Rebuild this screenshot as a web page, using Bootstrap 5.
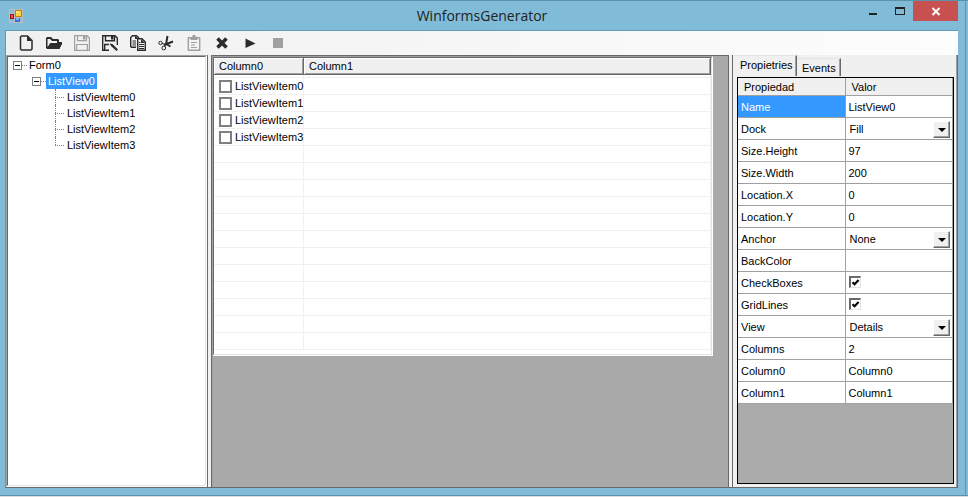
<!DOCTYPE html>
<html lang="en">
<head>
<meta charset="utf-8">
<meta name="viewport" content="width=device-width, initial-scale=1">
<title>WinformsGenerator</title>
<link href="https://cdn.jsdelivr.net/npm/bootstrap@5.3.0/dist/css/bootstrap.min.css" rel="stylesheet">
<style>
  body { font: 11px/16px "Liberation Sans", Arial, sans-serif; color: #000; background: #d9dde0; }
  .app-window { background: #80bcd8; border-top: 1px solid #5c93ab; border-bottom: 1px solid #5c93ab; padding: 0 10px 7px 5px; margin-bottom: 1px; position: relative; }
  .app-window::after { content: ""; position: absolute; top: 0; right: 2px; bottom: 0; border-right: 1px solid #5c93ab; }
  .title-bar { height: 29px; }
  .title-bar h1 { font: 14px/20px "Open Sans", "Noto Sans", sans-serif; color: #222; padding: 5px 0 0 82px; }
  .win-btn { width: 27px; height: 20px; padding: 0; border: 0; background: none; line-height: 0; }
  .win-close { width: 45px; background: #c75050; }
  .client { border: 1px solid #629bb5; border-bottom-color: #696969; border-right: 0; background: #f0f0f0; }
  .tools { height: 24px; padding-left: 6px; background: linear-gradient(90deg, #f0f0f0, #fdfdfd); }
  .tool { width: 28px; height: 24px; padding: 0; border: 0; background: none; color: #2b2b2b; line-height: 0; }
  .tool:disabled { color: #a0a0a0; }
  .tool svg, .win-btn svg { display: inline-block; }
  .tree-pane { width: 201px; background: #fff; border: 1px solid #a0a0a0; border-right-color: #fff; border-bottom-color: #fff; }
  .tree-in { border: 1px solid #696969; border-right-color: #e3e3e3; border-bottom-color: #e3e3e3; padding: 0 0 0 5px; }
  .tree-in ul ul { padding-left: 19px; }
  .tree-row { height: 16px; }
  .fold { width: 9px; height: 9px; padding: 0; border: 1px solid #808080; background: linear-gradient(#000, #000) center / 5px 1px no-repeat #fff; }
  .dash { width: 5px; border-top: 1px dotted #808080; }
  .node { padding: 0 2px; }
  .node.picked { background: #3399ff; color: #fff; }
  .limb { width: 10px; height: 16px; margin-left: 4px; position: relative; }
  .limb::before { content: ""; position: absolute; left: 0; top: 0; height: 16px; border-left: 1px dotted #808080; }
  .limb::after { content: ""; position: absolute; left: 0; top: 8px; width: 9px; border-top: 1px dotted #808080; }
  li:last-child > .tree-row > .limb::before { height: 8px; }
  .splitter { width: 5px; border: 1px solid #696969; border-width: 0 1px; background: #f0f0f0; }
  .canvas { background: #a9a9a9; border-top: 1px solid #696969; border-left: 1px solid #a0a0a0; min-width: 0; }
  .list-box { margin-right: 15px; background: #fff; border: 1px solid #a0a0a0; border-left: 0; border-right-color: #fff; border-bottom-color: #fff; }
  .list-in { border: 1px solid #696969; border-right-color: #e3e3e3; border-bottom-color: #e3e3e3; padding-bottom: 4px; }
  .grid { width: 100%; table-layout: fixed; border-collapse: separate; border-spacing: 0; }
  .grid th { font-weight: 400; background: #f0f0f0; }
  .list th { height: 17px; padding: 0 5px; border: 1px solid #696969; border-width: 0 1px 1px 0; box-shadow: inset 1px 1px #fff, inset -1px -1px #a0a0a0; }
  .list td { height: 17px; padding: 0 0 0 5px; border: 1px solid #f0f0f0; border-width: 0 1px 1px 0; }
  .list tr.lead-gap td { height: 3px; }
  .list label { gap: 3px; }
  .pick { appearance: none; flex: none; width: 13px; height: 13px; margin: 0; border: 2px solid #808080; background: #fff; }
  .side { width: 225px; border-right: 1px solid #696969; box-shadow: inset -1px 0 #a0a0a0; padding: 0 3px 0 1px; }
  .tabs { height: 21px; }
  .tab-btn { font: inherit; border: 0; padding: 0 5px; background: #f0f0f0; border-top: 1px solid #e3e3e3; border-right: 1px solid #696969; box-shadow: inset -1px 0 #a0a0a0; }
  .tab-btn.on { height: 21px; width: 63px; padding-left: 6px; padding-bottom: 2px; }
  .tab-btn.off { height: 18px; width: 44px; }
  .prop-box { background: #ababab; border: 1px solid #000; margin: 1px 0 3px 3px; }
  .props th, .props td { height: 22px; padding: 0 3px; border: 1px solid #a0a0a0; border-width: 0 1px 1px 0; background: #fff; vertical-align: middle; }
  .props thead th { height: 18px; padding: 0 6px; background: #f0f0f0; }
  .props tbody tr.sel th { background: #3399ff; color: #fff; }
  .drop { appearance: none; font: inherit; color: #000; border: 0; background: none; width: 100%; height: 20px; padding: 0 0 0 1px; }
  .arrow { position: absolute; right: -1px; top: 2px; width: 17px; height: 17px; background: #f0f0f0; border: 1px solid #fff; border-right-color: #696969; border-bottom-color: #696969; box-shadow: inset -1px -1px #a0a0a0; pointer-events: none; }
  .arrow::after { content: ""; position: absolute; left: 4px; top: 6px; border: 4px solid transparent; border-top-color: #000; border-bottom: 0; }
  .tick { appearance: none; display: block; width: 12px; height: 12px; margin: 0 0 2px; border: 2px solid #696969; border-right: 1px solid #e3e3e3; border-bottom: 1px solid #e3e3e3; background: #fff; }
  .tick:checked { background: #fff url("data:image/svg+xml,%3Csvg xmlns='http://www.w3.org/2000/svg' viewBox='0 0 9 9'%3E%3Cpath d='M1.5 4.2 3.6 6.3 7.6 2' fill='none' stroke='%23000' stroke-width='2.1'/%3E%3C/svg%3E") center / 9px 9px no-repeat; }
</style>
<script src="https://cdn.jsdelivr.net/npm/bootstrap@5.3.0/dist/js/bootstrap.bundle.min.js"></script>
</head>
<body class="vh-100 d-flex flex-column overflow-hidden">
<div class="app-window flex-grow-1 d-flex flex-column">
  <header class="title-bar d-flex align-items-start">
    <svg class="ms-1 mt-2" width="14" height="14" viewBox="0 0 14 14" aria-hidden="true">
      <path d="M0 0h14v14H0z" fill="#b9bec4"/><path d="M1 1h4v3H1zM1 10h4v3H1zM11 9h2v4h-2z" fill="#8cbad4"/>
      <path d="M6 1h7v7H6z" fill="#b98400"/><path d="M7 2h5v5H7z" fill="#ffd23c"/><path d="M7 2h3v2H7z" fill="#ffe98c"/>
      <path d="M1 5h4v5H1z" fill="#a31208"/><path d="M2 6h2v3H2z" fill="#e8574a"/><path d="M6 9h5v4H6z" fill="#3b6fd6"/><path d="M7 9h3v2H7z" fill="#7fb0ff"/>
    </svg>
    <h1 class="m-0 flex-grow-1 text-center">WinformsGenerator</h1>
    <button class="win-btn" aria-label="Minimize"><svg width="10" height="20" viewBox="0 0 10 20"><path d="M1 12h8v2H1z" fill="#222"/></svg></button>
    <button class="win-btn" aria-label="Maximize"><svg width="10" height="20" viewBox="0 0 10 20"><path d="M0 6h10v8H0zM1 8v5h8V8z" fill="#222" fill-rule="evenodd"/></svg></button>
    <button class="win-btn win-close" aria-label="Close"><svg width="10" height="20" viewBox="0 0 10 20"><path d="M1.500 7 8.500 14M8.500 7 1.500 14" stroke="#fff" stroke-width="2"/></svg></button>
  </header>

  <div class="client flex-grow-1 d-flex flex-column">
    <div class="tools d-flex" role="toolbar" aria-label="Tools">
      <button class="tool" aria-label="New"><svg width="16" height="16" viewBox="0 0 16 16"><path d="M3.500 1h6L14 5.500V14l-1 1H3.500l-1-1V2z" fill="none" stroke="currentColor" stroke-width="1.500"/><path d="M9 1v5h5z" fill="currentColor"/></svg></button>
      <button class="tool" aria-label="Open"><svg width="16" height="16" viewBox="0 0 16 16"><path d="M0 3l1-1h4l2 2h5l1 1v2h3v2l-3 5H1l-1-1zM1.500 12l3-4H11V6H6L4 4H1.500zM5 8.500h9.500V8H5z" fill="currentColor" fill-rule="evenodd"/><path d="M4.500 8H16l-2.500 6H2z" fill="currentColor"/></svg></button>
      <button class="tool" aria-label="Save" disabled><svg width="16" height="16" viewBox="0 0 16 16"><path d="M.6.600H13L15.400 3v12.400H.6zM3.500.600v5h9v-5M2.600 15.400V9.500h10.800v5.900" fill="none" stroke="currentColor" stroke-width="1.200"/><path d="M9 1h2.500v3.500H9z" fill="currentColor"/></svg></button>
      <button class="tool" aria-label="Save as"><svg width="16" height="16" viewBox="0 0 16 16"><path d="M7 15.300H.7V.7H13L15.300 3v7M3.500.7v5h9v-5M2.700 15.300V9.500H7" fill="none" stroke="currentColor" stroke-width="1.400"/><path d="M9 1h2.500v3.500H9zM7.500 8.500l3 .5 5.500 5.500L14.500 16 9 11z" fill="currentColor"/></svg></button>
      <button class="tool" aria-label="Copy"><svg width="16" height="16" viewBox="0 0 16 16"><path d="M6 12.300H1.500l-.8-.8v-9L2.500.7h4L9 3M7.700 3.700H12L15.300 7v8.300H7.700z" fill="none" stroke="currentColor" stroke-width="1.400"/><path d="M5 1v3h4zM11 4v4h4zM2.500 5.500H6v1H2.500zM2.500 7.500H6v1H2.500zM2.500 9.500H6v1H2.500zM9 9h5v1H9zM9 11h5v1H9zM9 13h5v1H9zM9 7h1.500v1H9z" fill="currentColor"/></svg></button>
      <button class="tool" aria-label="Cut"><svg width="16" height="16" viewBox="0 0 16 16"><path d="M9.500 1 8 9.500M15 6.500 6 10M8 9l4.500 2.500" fill="none" stroke="currentColor" stroke-width="2"/><path d="M8 9.500 4 8.500M8 9.500 6.500 12" stroke="currentColor"/><circle cx="2.500" cy="8" r="1.700" fill="none" stroke="currentColor"/><circle cx="5.800" cy="13" r="1.900" fill="none" stroke="currentColor"/></svg></button>
      <button class="tool" aria-label="Paste" disabled><svg width="16" height="16" viewBox="0 0 16 16"><path d="M2.300 2.700h11.400v12.600H2.300z" fill="none" stroke="currentColor" stroke-width="1.400"/><path d="M4.500 2H6l1-2h2l1 2h1.500v3h-7zM5 7h6v1H5zM5 9.500h4v1H5zM5 12h6v1H5z" fill="currentColor"/></svg></button>
      <button class="tool" aria-label="Delete"><svg width="16" height="16" viewBox="0 0 16 16"><path d="M3.500 3.500 12.500 12.500M12.500 3.500 3.500 12.500" stroke="currentColor" stroke-width="3.600"/></svg></button>
      <button class="tool" aria-label="Run"><svg width="16" height="16" viewBox="0 0 16 16"><path d="M3.500 3.500 13.500 8.500 3.500 13z" fill="currentColor"/></svg></button>
      <button class="tool" aria-label="Stop" disabled><svg width="16" height="16" viewBox="0 0 16 16"><path d="M3 3h10v10H3z" fill="currentColor"/></svg></button>
    </div>

    <div class="flex-grow-1 d-flex">
      <nav class="tree-pane d-flex flex-shrink-0" aria-label="Form tree">
        <div class="tree-in flex-grow-1">
          <ul class="list-unstyled m-0">
            <li>
              <div class="tree-row d-flex align-items-center"><button class="fold" aria-label="Collapse Form0"></button><span class="dash"></span><span class="node">Form0</span></div>
              <ul class="list-unstyled">
                <li>
                  <div class="tree-row d-flex align-items-center"><button class="fold" aria-label="Collapse ListView0"></button><span class="dash"></span><span class="node picked">ListView0</span></div>
                  <ul class="list-unstyled">
                    <li><div class="tree-row d-flex"><span class="limb"></span><span class="node">ListViewItem0</span></div></li>
                    <li><div class="tree-row d-flex"><span class="limb"></span><span class="node">ListViewItem1</span></div></li>
                    <li><div class="tree-row d-flex"><span class="limb"></span><span class="node">ListViewItem2</span></div></li>
                    <li><div class="tree-row d-flex"><span class="limb"></span><span class="node">ListViewItem3</span></div></li>
                  </ul>
                </li>
              </ul>
            </li>
          </ul>
        </div>
      </nav>
      <div class="splitter flex-shrink-0"></div>
      <main class="canvas flex-grow-1">
        <div class="list-box"><div class="list-in">
          <table class="grid list">
            <colgroup><col style="width:90px"><col></colgroup>
            <thead><tr><th>Column0</th><th>Column1</th></tr></thead>
            <tbody>
              <tr class="lead-gap"><td></td><td></td></tr>
              <tr><td><label class="d-flex align-items-center"><input class="pick" type="checkbox">ListViewItem0</label></td><td></td></tr>
              <tr><td><label class="d-flex align-items-center"><input class="pick" type="checkbox">ListViewItem1</label></td><td></td></tr>
              <tr><td><label class="d-flex align-items-center"><input class="pick" type="checkbox">ListViewItem2</label></td><td></td></tr>
              <tr><td><label class="d-flex align-items-center"><input class="pick" type="checkbox">ListViewItem3</label></td><td></td></tr>
              <tr><td></td><td></td></tr><tr><td></td><td></td></tr><tr><td></td><td></td></tr><tr><td></td><td></td></tr>
              <tr><td></td><td></td></tr><tr><td></td><td></td></tr><tr><td></td><td></td></tr><tr><td></td><td></td></tr>
              <tr><td></td><td></td></tr><tr><td></td><td></td></tr><tr><td></td><td></td></tr><tr><td></td><td></td></tr>
            </tbody>
          </table>
        </div></div>
      </main>
      <div class="splitter flex-shrink-0"></div>
      <aside class="side d-flex flex-column flex-shrink-0">
        <div class="tabs d-flex align-items-end" role="tablist">
          <button class="tab-btn on text-start" role="tab" aria-selected="true">Propietries</button>
          <button class="tab-btn off text-start" role="tab" aria-selected="false">Events</button>
        </div>
        <div class="prop-box flex-grow-1">
          <table class="grid props">
            <thead><tr><th>Propiedad</th><th>Valor</th></tr></thead>
            <tbody>
              <tr class="sel"><th scope="row">Name</th><td>ListView0</td></tr>
              <tr><th scope="row" id="p-dock">Dock</th><td><div class="position-relative"><select class="drop" aria-labelledby="p-dock"><option>Fill</option></select><span class="arrow"></span></div></td></tr>
              <tr><th scope="row">Size.Height</th><td>97</td></tr>
              <tr><th scope="row">Size.Width</th><td>200</td></tr>
              <tr><th scope="row">Location.X</th><td>0</td></tr>
              <tr><th scope="row">Location.Y</th><td>0</td></tr>
              <tr><th scope="row" id="p-anchor">Anchor</th><td><div class="position-relative"><select class="drop" aria-labelledby="p-anchor"><option>None</option></select><span class="arrow"></span></div></td></tr>
              <tr><th scope="row">BackColor</th><td></td></tr>
              <tr><th scope="row" id="p-check">CheckBoxes</th><td><input class="tick" type="checkbox" checked aria-labelledby="p-check"></td></tr>
              <tr><th scope="row" id="p-grid">GridLines</th><td><input class="tick" type="checkbox" checked aria-labelledby="p-grid"></td></tr>
              <tr><th scope="row" id="p-view">View</th><td><div class="position-relative"><select class="drop" aria-labelledby="p-view"><option>Details</option></select><span class="arrow"></span></div></td></tr>
              <tr><th scope="row">Columns</th><td>2</td></tr>
              <tr><th scope="row">Column0</th><td>Column0</td></tr>
              <tr><th scope="row">Column1</th><td>Column1</td></tr>
            </tbody>
          </table>
        </div>
      </aside>
    </div>
  </div>
</div>
</body>
</html>
